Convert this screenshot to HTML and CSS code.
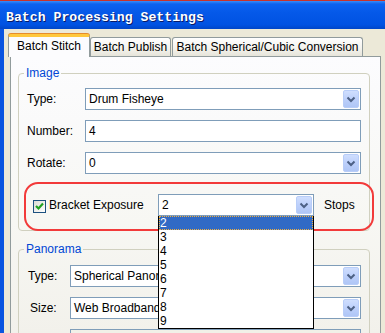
FILE: index.html
```html
<!DOCTYPE html>
<html>
<head>
<meta charset="utf-8">
<link rel="stylesheet" href="styles.css">
</head>
<body>
<div class="window">
  <div class="titlebar"><span class="title">Batch Processing Settings</span></div>
  <div class="client">
    <div class="tabs">
      <div class="tab sel t1">Batch Stitch</div>
      <div class="tab t2">Batch Publish</div>
      <div class="tab t3">Batch Spherical/Cubic Conversion</div>
    </div>
    <div class="panel">
      <fieldset class="group g-image">
        <legend>Image</legend>
        <div class="row">
          <label class="lbl">Type:</label>
          <div class="combo"><span class="val">Drum Fisheye</span><i class="btn"><svg width="14" height="16" viewBox="0 0 14 16"><path d="M3.5 6.5 L7 10 L10.5 6.5" fill="none" stroke="#4d6185" stroke-width="2"/></svg></i></div>
        </div>
        <div class="row">
          <label class="lbl">Number:</label>
          <div class="combo field"><span class="val">4</span></div>
        </div>
        <div class="row">
          <label class="lbl">Rotate:</label>
          <div class="combo"><span class="val">0</span><i class="btn"><svg width="14" height="16" viewBox="0 0 14 16"><path d="M3.5 6.5 L7 10 L10.5 6.5" fill="none" stroke="#4d6185" stroke-width="2"/></svg></i></div>
        </div>
        <div class="bracket">
          <span class="check"><svg width="11" height="11" viewBox="0 0 11 11"><path d="M2 5 L4.5 7.5 L9 2.5" fill="none" stroke="#21a121" stroke-width="2.2"/></svg></span>
          <span class="blabel">Bracket Exposure</span>
          <div class="combo small"><span class="val">2</span><i class="btn"><svg width="14" height="16" viewBox="0 0 14 16"><path d="M3.5 6.5 L7 10 L10.5 6.5" fill="none" stroke="#4d6185" stroke-width="2"/></svg></i>
            <ul class="list">
              <li class="on">2</li>
              <li>3</li>
              <li>4</li>
              <li>5</li>
              <li>6</li>
              <li>7</li>
              <li>8</li>
              <li>9</li>
            </ul>
          </div>
          <span class="stops">Stops</span>
        </div>
      </fieldset>
      <fieldset class="group g-pano">
        <legend>Panorama</legend>
        <div class="row">
          <label class="lbl l-type">Type:</label>
          <div class="combo"><span class="val">Spherical Panor</span><i class="btn"><svg width="14" height="16" viewBox="0 0 14 16"><path d="M3.5 6.5 L7 10 L10.5 6.5" fill="none" stroke="#4d6185" stroke-width="2"/></svg></i></div>
        </div>
        <div class="row">
          <label class="lbl l-size">Size:</label>
          <div class="combo"><span class="val">Web Broadband</span><i class="btn"><svg width="14" height="16" viewBox="0 0 14 16"><path d="M3.5 6.5 L7 10 L10.5 6.5" fill="none" stroke="#4d6185" stroke-width="2"/></svg></i></div>
        </div>
        <div class="row last">
          <label class="lbl"></label>
          <div class="combo dis"><span class="val"></span></div>
        </div>
      </fieldset>
    </div>
  </div>
</div>
</body>
</html>
```
FILE: styles.css
```css
html, body {
  margin: 0;
  padding: 0;
}
body {
  width: 385px;
  height: 333px;
  overflow: hidden;
  background: #ece9d8;
  font-family: "Liberation Sans", Arial, sans-serif;
  font-size: 12px;
  color: #000;
}
.window {
  width: 385px;
  height: 333px;
  overflow: hidden;
}
.titlebar {
  box-sizing: border-box;
  height: 29px;
  border-top: 1px solid #c8322a;
  background: linear-gradient(#3a8cf8 0, #0c62ef 3px, #0559e9 40%, #0052e2 85%, #0046c8 100%);
  padding: 4px 0 0 6px;
  display: flex;
  align-items: center;
}
.title {
  font-family: "Liberation Mono", "Courier New", monospace;
  font-weight: bold;
  font-size: 13.2px;
  color: #fff;
  text-shadow: 1px 1px 0 #0a1a66;
}
.client {
  box-sizing: border-box;
  border-left: 4px solid #0a55e0;
  height: 304px;
  overflow: hidden;
}
.tabs {
  display: flex;
  align-items: flex-end;
  height: 27px;
  padding-left: 4px;
}
.tab {
  box-sizing: border-box;
  height: 19px;
  border: 1px solid #919b9c;
  border-bottom: none;
  border-radius: 3px 3px 0 0;
  background: linear-gradient(#ffffff, #f3f2ec 60%, #e6e4da);
  text-align: center;
  line-height: 18px;
  white-space: nowrap;
}
.tab.sel {
  position: relative;
  z-index: 2;
  height: 23px;
  margin-bottom: -1px;
  background: #fcfcfe;
  border-top: 3px solid #ffc83c;
  box-shadow: 0 -1px 0 #e68b2c;
  line-height: 19px;
}
.t1 { width: 82px; }
.t2 { width: 81px; }
.t3 { width: 191px; margin-left: 1px; }
.panel {
  position: relative;
  box-sizing: border-box;
  margin-left: 6px;
  width: 371px;
  height: 277px;
  overflow: hidden;
  border: 1px solid #919b9c;
  border-bottom: none;
  background: linear-gradient(#fcfcfe, #f7f7f3 60%, #f2f1eb);
  padding: 9px 10px 0 7px;
}
.group {
  margin: 0;
  border: 1px solid #d0d0bf;
  border-radius: 4px;
  padding: 8px 8px 0 8px;
  min-width: 0;
}
.group legend {
  margin-left: -3px;
  padding: 0 2px;
  line-height: 14px;
  color: #0046d5;
}
.g-pano {
  margin-top: 11px;
  padding-top: 9px;
}
.row {
  display: flex;
  align-items: center;
  height: 22px;
  margin-bottom: 10px;
}
.row.last {
  margin-bottom: 0;
}
.lbl {
  width: 58px;
  flex: none;
}
.g-pano .lbl {
  width: 43px;
}
.l-type { padding-left: 1px; box-sizing: border-box; }
.l-size { padding-left: 3px; box-sizing: border-box; }
.combo {
  position: relative;
  box-sizing: border-box;
  flex: 1;
  height: 22px;
  border: 1px solid #7f9db9;
  background: #fff;
  display: flex;
  align-items: stretch;
}
.combo .val {
  flex: 1;
  padding-left: 3px;
  line-height: 20px;
  white-space: nowrap;
  overflow: hidden;
}
.btn {
  box-sizing: border-box;
  width: 16px;
  margin: 1px;
  border: 1px solid #b8cdf8;
  border-radius: 2px;
  background: linear-gradient(#cfdefe, #bdd0fb 50%, #afc6f6);
  display: flex;
  align-items: center;
  justify-content: center;
}
.btn svg {
  display: block;
}
.combo.dis {
  background: #f1f0e8;
}
.bracket {
  box-sizing: border-box;
  display: flex;
  align-items: center;
  height: 49px;
  margin: -2px -13px -1px -3px;
  padding: 0 0 3px 7px;
  border: 2px solid #f23a3a;
  border-radius: 14px;
}
.check {
  box-sizing: border-box;
  flex: none;
  width: 13px;
  height: 13px;
  margin-top: 2px;
  border: 1px solid #1c5180;
  background: linear-gradient(135deg, #dcdcd5, #fff);
  display: flex;
  align-items: center;
  justify-content: center;
}
.check svg { display: block; }
.blabel {
  flex: none;
  width: 109px;
  margin-left: 3px;
  white-space: nowrap;
}
.combo.small {
  flex: none;
  width: 156px;
}
.stops {
  margin-left: 10px;
}
.list {
  position: absolute;
  z-index: 10;
  left: -1px;
  top: 21px;
  box-sizing: border-box;
  width: 156px;
  margin: 0;
  padding: 0;
  list-style: none;
  background: #fff;
  border: 1px solid #000;
  border-top: none;
}
.list li {
  height: 14px;
  line-height: 14px;
  padding-left: 1px;
}
.list li.on {
  background: #316ac5;
  color: #fff;
  outline: 1px dotted #f0b040;
  outline-offset: -1px;
}
```
